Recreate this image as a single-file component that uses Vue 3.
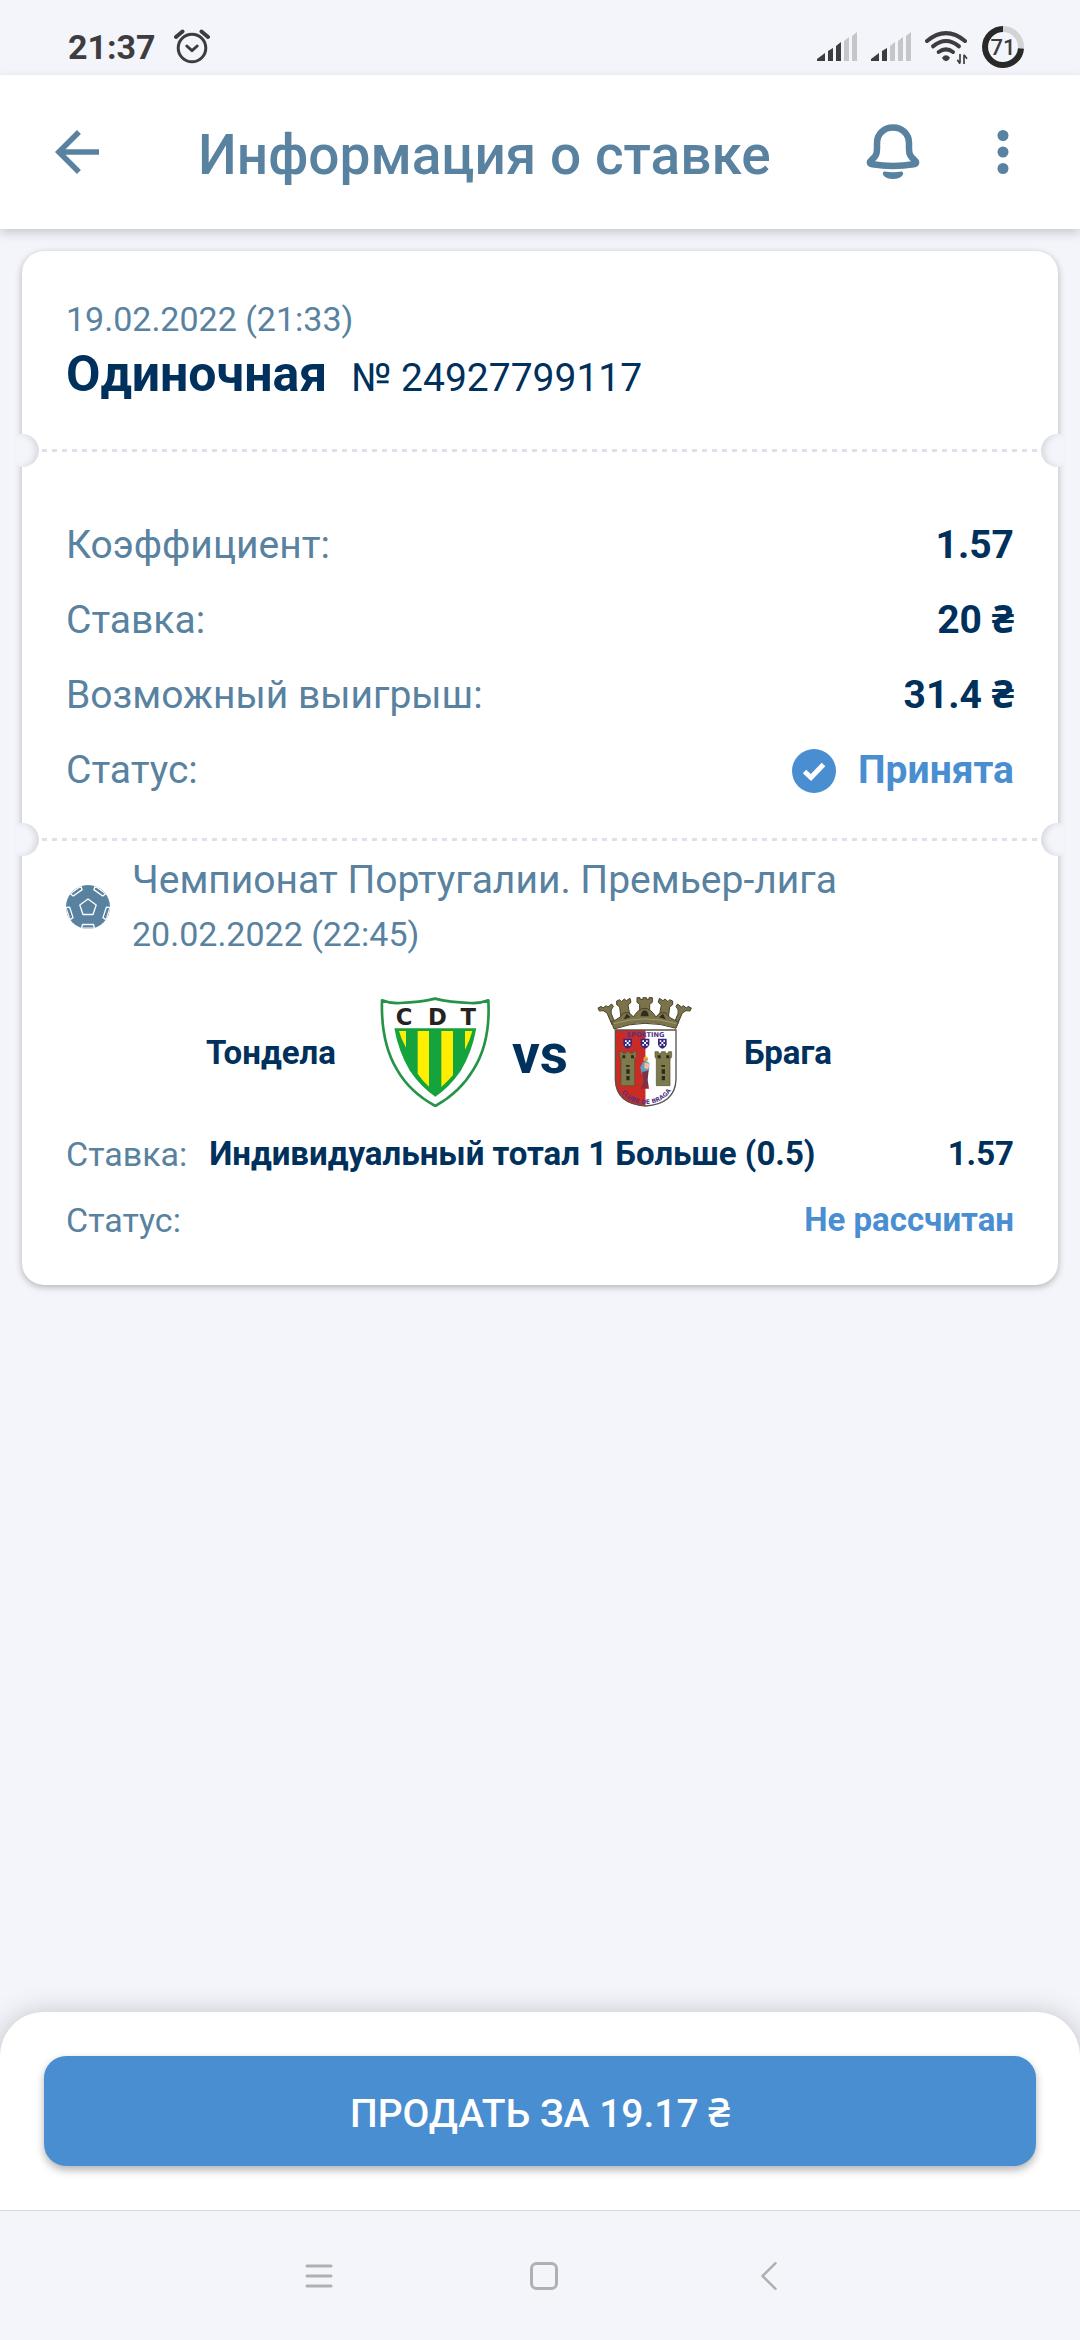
<template>
    <div class="bet-page">
        <div class="status-bar">
            <span class="clock">21:37</span>
            <svg class="alarm" width="36" height="36" viewBox="0 0 36 36" fill="none" stroke="#3d3d3f" stroke-width="3" stroke-linecap="round" stroke-linejoin="round">
                <circle cx="18" cy="19" r="13.8" />
                <path d="M12.8 17l5.2 4.6 5.2-4.6" />
                <path d="M2 8l6.500-5.500M27.500 2.500L34 8" stroke-width="4" />
            </svg>
            <div class="status-icons">
                <svg v-for="(level, i) in signals" :key="i" width="40" height="29" viewBox="0 0 40 29">
                    <path
                        v-for="(bar, n) in signalBars"
                        :key="n"
                        :d="bar"
                        :fill="n < level ? '#3d3d3f' : '#c5c6ca'"
                    />
                </svg>
                <svg class="wifi" width="43" height="36" viewBox="378 60 129 108" fill="none" stroke="#3d3d3f" stroke-width="12" stroke-linecap="round">
                    <path d="M384 96Q441 49 498 96" />
                    <path d="M402 112Q441 80 480 112" />
                    <path d="M419 129Q441 113 462 129" />
                    <path d="M429 146q12-14 24 0q-3 8-12 11q-9-3-12-11z" fill="#3d3d3f" stroke="none" />
                    <path d="M483 135v28M483 164l-8-12M495 165v-28M495 137l9 12" stroke-width="5" stroke-linecap="butt" />
                </svg>
                <svg class="battery" width="42" height="42" viewBox="0 0 42 42">
                    <circle cx="21" cy="21" r="18" fill="none" stroke="#d2d3d4" stroke-width="6" />
                    <path d="M21 3A18 18 0 1 0 39 22.500" fill="none" stroke="#29292a" stroke-width="6" />
                    <text x="21" y="29" text-anchor="middle" font-size="22" font-weight="500" fill="#3d3d3f">71</text>
                </svg>
            </div>
        </div>

        <header class="header">
            <button class="icon-button" type="button" aria-label="Назад">
                <svg width="66" height="66" viewBox="0 0 24 24" fill="currentColor">
                    <path d="M20 11H7.830l5.590-5.590L12 4l-8 8 8 8 1.410-1.410L7.830 13H20z" />
                </svg>
            </button>
            <h1>Информация о ставке</h1>
            <button class="icon-button bell" type="button" aria-label="Уведомления">
                <svg width="54" height="56" viewBox="0 0 54 56">
                    <path d="M27 3.500C18 3.500 11 10 11 19V25C11 31 9 33 5.500 36C3 38 3.500 39.800 6.500 40.300C20 42.500 34 42.500 47.500 40.300C50.500 39.800 51 38 48.500 36C45 33 43 31 43 25V19C43 10 36 3.500 27 3.500Z" fill="none" stroke="currentColor" stroke-width="6.500" stroke-linejoin="round" />
                    <path d="M18.500 47.500Q27 49 35.500 47.500Q38 48 36.800 51Q34 55 27 55Q20 55 17.200 51Q16 48 18.500 47.500Z" fill="currentColor" />
                </svg>
            </button>
            <button class="icon-button" type="button" aria-label="Меню">
                <svg width="66" height="66" viewBox="0 0 24 24" fill="currentColor">
                    <circle cx="12" cy="6" r="2" />
                    <circle cx="12" cy="12" r="2" />
                    <circle cx="12" cy="18" r="2" />
                </svg>
            </button>
        </header>

        <main class="content">
            <article class="ticket">
                <section class="ticket-head">
                    <p class="date">{{ bet.date }}</p>
                    <div class="ticket-title">
                        <h2>{{ bet.type }}</h2>
                        <span>№ {{ bet.number }}</span>
                    </div>
                </section>

                <div class="divider"></div>

                <dl class="summary">
                    <div v-for="row in summary" :key="row.label" class="summary-row">
                        <dt>{{ row.label }}</dt>
                        <dd>{{ row.value }}</dd>
                    </div>
                    <div class="summary-row">
                        <dt>Статус:</dt>
                        <dd class="accepted">
                            <svg width="44" height="44" viewBox="0 0 44 44">
                                <circle cx="22" cy="22" r="22" fill="currentColor" />
                                <path d="M12.500 22.500l6.500 6L31.500 15.500" fill="none" stroke="#fff" stroke-width="5" />
                            </svg>
                            Принята
                        </dd>
                    </div>
                </dl>

                <div class="divider"></div>

                <section class="event">
                    <div class="league">
                        <svg width="44" height="44" viewBox="0 0 44 44">
                            <defs>
                                <clipPath id="ball"><circle cx="22" cy="22" r="22" /></clipPath>
                            </defs>
                            <circle cx="22" cy="22" r="22" fill="#5882a0" />
                            <g clip-path="url(#ball)" fill="none" stroke="#fff" stroke-width="1.300" stroke-linejoin="round">
                                <path d="M22 14l8.200 6-3.200 9.500H17L13.800 20z" />
                                <path
                                    v-for="angle in [0, 72, 144, 216, 288]"
                                    :key="angle"
                                    d="M15.500 43.200L16.500 39.500H27.500L28.500 43.200Z"
                                    :transform="`rotate(${angle} 22 22)`"
                                />
                            </g>
                        </svg>
                        <div class="league-info">
                            <h3>{{ event.league }}</h3>
                            <p class="date">{{ event.date }}</p>
                        </div>
                    </div>

                    <div class="teams">
                        <span class="team home">{{ event.home }}</span>
                        <svg width="110" height="110" viewBox="60 54 330 330">
                            <path d="M66 64Q90 74 120 72Q180 70 225 59Q270 70 330 72Q360 74 385 64Q392 190 340 272Q300 340 226 381Q150 340 111 272Q62 190 66 64Z" fill="#fff" stroke="#269447" stroke-width="8" stroke-linejoin="round" />
                            <path d="M103 148H349Q336 220 302 276Q268 325 226 353Q184 325 150 276Q116 220 103 148Z" fill="#15a33d" />
                            <g fill="#ffee00">
                                <path d="M117 156H138V206Q124 182 117 156Z" />
                                <path d="M173 156H207V323Q188 306 173 284Z" />
                                <path d="M244 156H279V288Q262 308 244 324Z" />
                                <path d="M315 156H337Q330 184 315 212Z" />
                            </g>
                            <g class="crest-letters" fill="#25221f" font-size="68" font-weight="700" text-anchor="middle">
                                <text x="132" y="138">C</text>
                                <text x="232" y="138">D</text>
                                <text x="325" y="138">T</text>
                            </g>
                        </svg>
                        <span class="versus">vs</span>
                        <svg width="110" height="110" viewBox="690 54 330 330">
                            <!-- crown -->
                            <g fill="#7b744b" stroke="#49432c" stroke-width="3" stroke-linejoin="round">
                                <path d="M714 87L724 82L729 87L738 80L744 84L755 75L760 82Q750 94 754 104L764 129L756 137L741 102Q730 91 718 96Z" />
                                <path d="M994 87L984 82L979 87L970 80L964 84L953 75L948 82Q958 94 954 104L944 129L952 137L967 102Q978 91 990 96Z" />
                                <path d="M770 66L779 62L784 68L793 60L799 65L810 58L813 70L804 78L812 122L784 126L779 84L770 77Z" />
                                <path d="M938 66L929 62L924 68L915 60L909 65L898 58L895 70L904 78L896 122L924 126L929 84L938 77Z" />
                                <path d="M831 56H840V61H849V56H859V61H867V56H877V70L869 76V120H839V76L831 70Z" />
                                <path d="M754 128Q782 118 790 102Q808 96 820 114Q836 88 854 88Q872 88 888 114Q900 96 918 102Q926 118 956 128L948 148Q854 117 762 150Z" />
                                <path d="M762 134Q854 105 949 134" fill="none" stroke="#a39b75" />
                            </g>
                            <path d="M842 112Q844 94 854 94Q864 94 866 112ZM791 121L800 104L812 115ZM897 115L909 104L917 121Z" fill="#302c1e" />
                            <!-- shield halves -->
                            <path d="M766 153H857V381Q766 378 766 304Z" fill="#ca2c25" />
                            <path d="M857 153H948V304Q948 378 857 381Z" fill="#fff" />
                            <path d="M766 153H948V302Q945 374 857 381Q769 374 766 302Z" fill="none" stroke="#57524a" stroke-width="4" />
                            <text class="crest-letters" x="856" y="173" text-anchor="middle" font-size="20" font-weight="700" fill="#553382">SPORTING</text>
                            <g v-for="x in [803, 855, 907]" :key="x">
                                <path :d="`M${x - 13} 179h26v17q-2 10-13 13q-11-3-13-13z`" fill="#34287e" />
                                <path :d="`M${x - 8} 184h5v5h6v-5h5v5h-5v6h5v5h-5v-5h-6v5h-5v-5h5v-6h-5z`" fill="#fff" />
                            </g>
                            <g v-for="x in [804, 910]" :key="x">
                                <path :d="`M${x - 25} 218h10v5h9v-5h12v5h9v-5h10v16l-5 6v80h-41v-80l-4-6z`" fill="#7d7b4d" stroke="#55522f" stroke-width="2" />
                                <path :d="`M${x - 17} 229h9v9h-9zM${x + 9} 229h9v9h-9zM${x - 6} 258h11v5h-11zM${x - 5} 271h10v13h-10zM${x - 5} 291h10v13h-10z`" fill="#2c291d" />
                            </g>
                            <!-- figure in the middle of the shield -->
                            <circle cx="857" cy="241" r="7" fill="#dc9a4b" />
                            <path d="M851 236L858 230L864 237Z" fill="#e8c33b" />
                            <path d="M849 249Q858 243 868 252L867 276L845 284L841 265Z" fill="#5f9ec2" />
                            <path d="M854 251L870 254L864 270L853 268Z" fill="#efc09b" />
                            <path d="M847 280L866 274L863 302L867 329H842L851 307Z" fill="#9b2630" />
                            <path d="M849 278L854 300L849 322M861 280L859 318" fill="none" stroke="#384c72" stroke-width="3" />
                            <path id="motto" d="M779 330Q802 374 857 375Q912 374 938 326" fill="none" />
                            <text class="crest-letters" font-size="18" font-weight="700" fill="#553382">
                                <textPath href="#motto" startOffset="50%" text-anchor="middle">CLUBE DE BRAGA</textPath>
                            </text>
                        </svg>
                        <span class="team">{{ event.away }}</span>
                    </div>

                    <dl class="outcome">
                        <div class="outcome-row">
                            <dt>Ставка:</dt>
                            <dd class="market">{{ event.market }}</dd>
                            <dd>{{ event.odds }}</dd>
                        </div>
                        <div class="outcome-row">
                            <dt>Статус:</dt>
                            <dd class="pending">Не рассчитан</dd>
                        </div>
                    </dl>
                </section>
            </article>
        </main>

        <footer class="sell-panel">
            <button class="sell-button" type="button">ПРОДАТЬ ЗА {{ bet.sellPrice }} ₴</button>
        </footer>

        <nav class="system-nav">
            <button type="button" aria-label="Недавние">
                <svg width="28" height="28" viewBox="0 0 28 28" fill="none" stroke="#b0b0b0" stroke-width="3" stroke-linecap="round">
                    <path d="M2 4h24M2 14h24M2 24h24" />
                </svg>
            </button>
            <button type="button" aria-label="Домой">
                <svg width="28" height="28" viewBox="0 0 28 28" fill="none" stroke="#b0b0b0" stroke-width="3">
                    <rect x="1.500" y="1.500" width="25" height="25" rx="5" />
                </svg>
            </button>
            <button type="button" aria-label="Назад">
                <svg width="28" height="28" viewBox="0 0 28 28" fill="none" stroke="#b0b0b0" stroke-width="2.500" stroke-linecap="round" stroke-linejoin="round">
                    <path d="M20.500 1.200L7.500 14l13 12.800" />
                </svg>
            </button>
        </nav>
    </div>
</template>

<script setup>
import { ref, computed } from 'vue'

const signals = [3, 2]

const signalBars = [
    'M0 29V27L8 21V29Z',
    'M11 29V19L16 16V29Z',
    'M19 29V14L24 10V29Z',
    'M27 29V9L32 5V29Z',
    'M35 29V4L40 0V29Z'
]

const bet = ref({
    date: '19.02.2022 (21:33)',
    type: 'Одиночная',
    number: '24927799117',
    odds: 1.57,
    stake: 20,
    win: 31.4,
    sellPrice: 19.17
})

const event = ref({
    league: 'Чемпионат Португалии. Премьер-лига',
    date: '20.02.2022 (22:45)',
    home: 'Тондела',
    away: 'Брага',
    market: 'Индивидуальный тотал 1 Больше (0.5)',
    odds: 1.57
})

const summary = computed(() => [
    { label: 'Коэффициент:', value: bet.value.odds },
    { label: 'Ставка:', value: `${bet.value.stake} ₴` },
    { label: 'Возможный выигрыш:', value: `${bet.value.win} ₴` }
])
</script>

<style>
body {
    margin: 0;
    background: #f4f5fa;
}
</style>

<style scoped>
.bet-page {
    display: flex;
    flex-direction: column;
    min-height: 100vh;
    background: #f4f5fa;
    color: #00305c;
    font-family: Roboto, 'Noto Sans', sans-serif;
    font-size: 39px;
}

h1, h2, h3, p, dl, dt, dd {
    margin: 0;
}

button {
    padding: 0;
    border: 0;
    background: none;
    color: inherit;
    font-family: inherit;
    cursor: pointer;
}

svg {
    display: block;
    flex-shrink: 0;
}

.status-bar {
    display: flex;
    align-items: center;
    height: 57px;
    padding: 18px 56px 0 68px;
    color: #3d3d3f;
}

.clock {
    font-size: 34px;
    font-weight: 700;
}

.alarm {
    margin-left: 18px;
}

.status-icons {
    display: flex;
    align-items: center;
    gap: 14px;
    margin-left: auto;
}

.header {
    display: flex;
    align-items: center;
    height: 154px;
    padding: 0 44px;
    background: #fff;
    color: #5882a0;
    box-shadow: 0 4px 10px rgba(0, 0, 0, 0.18);
}

.header h1 {
    flex: 1;
    margin-left: 88px;
    padding-top: 6px;
    font-size: 55px;
    font-weight: 500;
}

.bell {
    margin-right: 50px;
}

.content {
    flex: 1;
    padding: 22px;
}

.ticket {
    background: #fff;
    border-radius: 22px;
    box-shadow: 0 2px 7px rgba(0, 0, 0, 0.28);
}

.ticket-head {
    padding: 44px 44px 40px;
}

.date {
    color: #5882a0;
    font-size: 34px;
    line-height: 48px;
}

.ticket-title {
    display: flex;
    align-items: baseline;
    gap: 24px;
    line-height: 62px;
}

.ticket-title h2 {
    font-size: 50px;
    font-weight: 700;
}

.divider {
    position: relative;
    height: 3px;
    background: repeating-linear-gradient(90deg, #dfe1ea 0 5px, transparent 5px 10px);
}

/* ticket notches on both card edges */
.divider::before,
.divider::after {
    content: '';
    position: absolute;
    top: -15px;
    width: 23px;
    height: 33px;
    background: #f4f5fa;
}

.divider::before {
    left: -6px;
    border-radius: 0 17px 17px 0;
    box-shadow: inset -5px 0 7px -2px rgba(0, 0, 0, 0.12);
}

.divider::after {
    right: -6px;
    border-radius: 17px 0 0 17px;
    box-shadow: inset 5px 0 7px -2px rgba(0, 0, 0, 0.12);
}

.summary {
    padding: 56px 44px 30px;
    line-height: 75px;
}

.summary-row {
    display: flex;
    justify-content: space-between;
}

.summary-row dt,
.outcome-row dt {
    color: #5882a0;
}

.summary-row dd,
.outcome-row dd {
    font-weight: 700;
}

.summary-row .accepted {
    display: flex;
    align-items: center;
    gap: 22px;
    color: #4a8ed2;
}

.event {
    padding: 12px 44px 32px;
}

.league {
    display: flex;
    align-items: center;
    gap: 22px;
}

.league-info h3 {
    color: #5882a0;
    font-size: 39px;
    font-weight: 400;
    line-height: 54px;
}

.league-info .date {
    line-height: 54px;
}

.teams {
    display: grid;
    grid-template-columns: 1fr auto auto auto 1fr;
    align-items: center;
    margin: 36px 0 14px;
}

.team {
    margin: 0 44px;
    font-size: 33px;
    font-weight: 700;
}

.home {
    text-align: right;
}

.versus {
    padding: 4px 22px 0;
    font-size: 55px;
    font-weight: 700;
}

.crest-letters {
    font-family: 'DejaVu Sans', sans-serif;
}

.outcome {
    font-size: 33px;
    line-height: 66px;
}

.outcome-row {
    display: flex;
    gap: 22px;
}

.outcome-row dt {
    font-size: 34px;
}

.outcome-row .market {
    flex: 1;
}

.outcome-row .pending {
    margin-left: auto;
    color: #4a8ed2;
}

.sell-panel {
    padding: 44px;
    background: #fff;
    border-radius: 44px 44px 0 0;
    box-shadow: 0 4px 30px rgba(0, 0, 0, 0.25);
}

.sell-button {
    display: block;
    width: 100%;
    height: 110px;
    border-radius: 22px;
    background: #4a8ed2;
    color: #fff;
    font-size: 39px;
    font-weight: 500;
    box-shadow: 0 4px 8px rgba(0, 0, 0, 0.3);
}

.system-nav {
    position: relative;
    display: flex;
    justify-content: center;
    height: 129px;
    padding-left: 8px;
    border-top: 1px solid #d5dae0;
    background: #f4f5fa;
}

.system-nav button {
    display: flex;
    align-items: center;
    justify-content: center;
    width: 225px;
}
</style>
